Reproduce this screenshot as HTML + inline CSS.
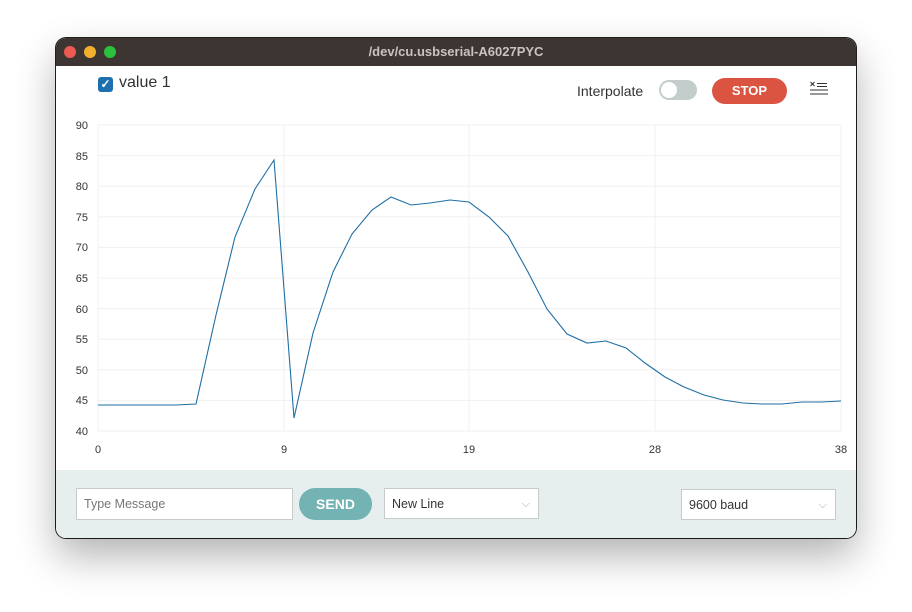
<!DOCTYPE html>
<html><head><style>
body{margin:0;width:912px;height:612px;background:#fff;font-family:"Liberation Sans",sans-serif;position:relative;overflow:hidden}
.win{position:absolute;left:56px;top:38px;width:800px;height:500px;border-radius:10px;overflow:hidden;background:#fff;box-shadow:0 18px 40px rgba(0,0,0,.3),0 0 0 1px #222}
.tb{height:28px;background:#3d3532;color:#c9c3c0;font-size:13px;font-weight:bold;text-align:center;line-height:28px}
.dot{position:absolute;top:8px;width:12px;height:12px;border-radius:50%}
.bot{position:absolute;left:0;top:432px;width:800px;height:68px;background:#e7eeee}
.in{position:absolute;background:#fff;border:1px solid #c6cccc;box-sizing:border-box;font-size:12.5px;color:#333;padding-left:7px;line-height:30px}
.chev{position:absolute;right:8px;top:0;color:#aaa;font-size:11px}
</style></head><body>
<div class="win">
<div class="tb">/dev/cu.usbserial-A6027PYC</div>
<div class="dot" style="left:8px;background:#ec5a52"></div>
<div class="dot" style="left:28px;background:#f2b02e"></div>
<div class="dot" style="left:48px;background:#2bc13f"></div>
<div style="position:absolute;left:42px;top:39px;width:15px;height:15px;background:#1d6fae;border-radius:3px;color:#fff;font-size:12px;line-height:15px;text-align:center;font-weight:bold">✓</div>
<div style="position:absolute;left:63px;top:36px;font-size:16px;color:#333">value 1</div>
<div style="position:absolute;left:521px;top:45px;font-size:14px;color:#333">Interpolate</div>
<div style="position:absolute;left:603px;top:42px;width:38px;height:20px;border-radius:10px;background:#c3cdcb"><div style="position:absolute;left:2px;top:2px;width:16px;height:16px;border-radius:50%;background:#fff"></div></div>
<div style="position:absolute;left:656px;top:40px;width:75px;height:26px;border-radius:13px;background:#da5441;color:#fff;font-weight:bold;font-size:13px;text-align:center;line-height:26px">STOP</div>
<svg style="position:absolute;left:753px;top:43px" width="20" height="16"><g stroke="#333" stroke-width="1.1"><path d="M1.5 1l4 4M5.5 1l-4 4M8 2.5h10M8 5.5h10M1 9h18M1 13h18"/></g></svg>
<svg style="position:absolute;left:0;top:0" width="800" height="432" font-family="Liberation Sans" font-size="11" fill="#333">
<g stroke="#f0f0f0" stroke-width="1">
<path d="M42 87h743M42 117.6h743M42 148.2h743M42 178.8h743M42 209.4h743M42 240h743M42 270.6h743M42 301.2h743M42 331.8h743M42 362.4h743M42 393h743"/>
<path d="M42 87v306M228 87v306M413 87v306M599 87v306M785 87v306"/>
</g>
<g text-anchor="end"><text x="32" y="91">90</text><text x="32" y="122">85</text><text x="32" y="152">80</text><text x="32" y="183">75</text><text x="32" y="213">70</text><text x="32" y="244">65</text><text x="32" y="275">60</text><text x="32" y="305">55</text><text x="32" y="336">50</text><text x="32" y="366">45</text><text x="32" y="397">40</text></g>
<g text-anchor="middle"><text x="42" y="415">0</text><text x="228" y="415">9</text><text x="413" y="415">19</text><text x="599" y="415">28</text><text x="785" y="415">38</text></g>
<polyline fill="none" stroke="#1f6fa5" stroke-width="1.1" transform="translate(-56,-38)" points="98,405 117,405 137,405 156,405 176,405 196,404 216,315 235,237 255,189 274,160 294,418 313,333 333,272 352,234 372,210 391,197 411,205 430,203 450,200 469,202 489,217 508,236 528,272 547,309 567,334 587,343 606,341 626,348 645,363 665,377 684,387 704,395 723,400 743,403 762,404 782,404 802,402 821,402 841,401"/>
</svg>
<div class="bot">
<div class="in" style="left:20px;top:18px;width:217px;height:32px;color:#777">Type Message</div>
<div style="position:absolute;left:243px;top:18px;width:73px;height:32px;border-radius:16px;background:#74b3b4;color:#fff;font-weight:bold;font-size:14px;text-align:center;line-height:32px">SEND</div>
<div class="in" style="left:328px;top:18px;width:155px;height:31px">New Line<span class="chev">⌵</span></div>
<div class="in" style="left:625px;top:19px;width:155px;height:31px">9600 baud<span class="chev">⌵</span></div>
</div>
</div>
</body></html>
